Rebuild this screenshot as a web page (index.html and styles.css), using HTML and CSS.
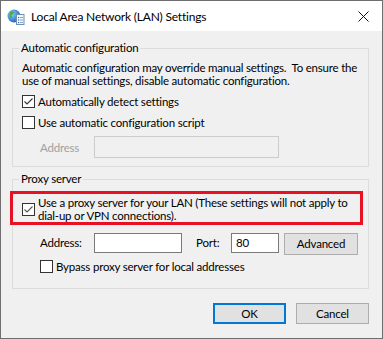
FILE: index.html
```html
<!DOCTYPE html>
<html lang="en">
<head>
  <meta charset="UTF-8">
  <title>Local Area Network (LAN) Settings</title>
  <link rel="stylesheet" href="styles.css">
</head>
<body>
  <div class="window">
    <div class="titlebar">
      <svg class="app-icon" width="18" height="18" viewBox="0 0 18 18">
        <defs>
          <radialGradient id="globe" cx="0.35" cy="0.35" r="0.7">
            <stop offset="0" stop-color="#8fd0ff"/>
            <stop offset="1" stop-color="#1a62b8"/>
          </radialGradient>
        </defs>
        <circle cx="7" cy="8" r="6.5" fill="url(#globe)"/>
        <path d="M3 4 Q5 3 7 4 L6.5 6 L4.5 7 L5 9.5 L3 10 Q1.5 7 3 4 Z" fill="#4caf3a"/>
        <path d="M8.5 9 L11 8.5 L12 11 L9.5 13.5 L8.5 12 Z" fill="#4caf3a"/>
        <rect x="9.5" y="6.5" width="7.5" height="10" fill="#f4f8fc" stroke="#6f8fb5"/>
        <rect x="11" y="9" width="1.2" height="1.2" fill="#3a6fb0"/>
        <rect x="13" y="9" width="3" height="1" fill="#8aa3c2"/>
        <rect x="11" y="11.5" width="1.2" height="1.2" fill="#3a6fb0"/>
        <rect x="13" y="11.5" width="3" height="1" fill="#8aa3c2"/>
        <rect x="11" y="14" width="1.2" height="1.2" fill="#3a6fb0"/>
        <rect x="13" y="14" width="3" height="1" fill="#8aa3c2"/>
      </svg>
      <span class="title">Local Area Network (LAN) Settings</span>
      <svg class="close" width="11" height="11" viewBox="0 0 11 11">
        <path d="M0.5 0.5 L10.5 10.5 M10.5 0.5 L0.5 10.5" stroke="#111" stroke-width="1"/>
      </svg>
    </div>

    <div class="content">
      <fieldset class="group group-auto">
        <legend>Automatic configuration</legend>
        <p class="desc">Automatic configuration may override manual settings.&nbsp; To ensure the<br>use of manual settings, disable automatic configuration.</p>
        <div class="check">
          <span class="box">
            <svg width="11" height="11" viewBox="0 0 11 11"><polyline points="1.5,5.5 4,8 9.5,2.5" fill="none" stroke="#333" stroke-width="1.1"/></svg>
          </span>
          <span>Automatically detect settings</span>
        </div>
        <div class="check">
          <span class="box"></span>
          <span>Use automatic configuration script</span>
        </div>
        <div class="field-row script-row">
          <span class="field-label disabled">Address</span>
          <span class="input input-disabled input-script"></span>
        </div>
      </fieldset>

      <fieldset class="group group-proxy">
        <legend>Proxy server</legend>
        <div class="check proxy-use">
          <span class="box">
            <svg width="11" height="11" viewBox="0 0 11 11"><polyline points="1.5,5.5 4,8 9.5,2.5" fill="none" stroke="#555" stroke-width="1.1"/></svg>
          </span>
          <span>Use a proxy server for your LAN (These settings will not apply to<br>dial-up or VPN connections).</span>
        </div>
        <div class="field-row proxy-row">
          <span class="field-label">Address:</span>
          <span class="input input-address"></span>
          <span class="field-label label-port">Port:</span>
          <span class="input input-port">80</span>
          <button class="btn btn-advanced">Advanced</button>
        </div>
        <div class="check bypass">
          <span class="box"></span>
          <span>Bypass proxy server for local addresses</span>
        </div>
      </fieldset>

      <div class="buttons">
        <button class="btn btn-default">OK</button>
        <button class="btn">Cancel</button>
      </div>
    </div>
  </div>
</body>
</html>
```

FILE: styles.css
```css
body {
  margin: 0;
  background-color: #f0f0f0;
  font-family: Lato, "Noto Sans", sans-serif;
  font-size: 11.5px;
  letter-spacing: -0.2px;
  color: #000;
}

.window {
  width: 383px;
  height: 339px;
  box-sizing: border-box;
  border: 1px solid #6e6e6e;
  background-color: #f0f0f0;
}

.titlebar {
  height: 30px;
  background-color: #fff;
  display: flex;
  align-items: center;
  padding-left: 6px;
}

.app-icon {
  margin-right: 6px;
  margin-top: 1px;
}

.title {
  flex: 1;
  font-size: 12px;
}

.close {
  margin-right: 13px;
}

.content {
  padding: 9px 0 0 11px;
}

.group {
  width: 357px;
  box-sizing: border-box;
  margin: 0;
  padding: 0 8px 0 9px;
  border: 1px solid #dcdcdc;
}

.group legend {
  margin-left: -3px;
  padding: 0 2px;
  line-height: 16px;
}

.group-auto {
  padding-bottom: 8px;
}

.group-proxy {
  margin-top: 4px;
  padding-bottom: 11px;
}

.desc {
  margin: 5px 0 4px 0;
  line-height: 13px;
  white-space: nowrap;
}

.check {
  display: flex;
  align-items: center;
  height: 21px;
  white-space: nowrap;
}

.box {
  width: 13px;
  height: 13px;
  box-sizing: border-box;
  border: 1px solid #333;
  background-color: #fff;
  margin-right: 3px;
  display: flex;
  align-items: center;
  justify-content: center;
  flex-shrink: 0;
}

.field-row {
  display: flex;
  align-items: center;
  padding-left: 18px;
}

.field-label {
  width: 54px;
}

.field-label.disabled {
  color: #a0a0a0;
}

.script-row {
  margin-top: 3px;
  height: 22px;
}

.input {
  box-sizing: border-box;
  border: 1px solid #7a7a7a;
  background-color: #fff;
  height: 20px;
  line-height: 18px;
  padding-left: 4px;
}

.input-disabled {
  border-color: #cccccc;
  background-color: #f0f0f0;
}

.input-script {
  width: 185px;
  height: 22px;
}

.proxy-use {
  position: relative;
  height: 26px;
  margin-top: 9px;
  line-height: 13px;
}

.proxy-use::after {
  content: "";
  position: absolute;
  left: -12px;
  top: -5px;
  width: 347px;
  height: 28px;
  border: 3px solid #e81123;
}

.proxy-row {
  margin-top: 9px;
  height: 23px;
}

.input-address {
  width: 88px;
}

.label-port {
  width: 35px;
  margin-left: 14px;
}

.input-port {
  width: 48px;
}

.btn {
  font-family: inherit;
  font-size: 11.5px;
  letter-spacing: -0.2px;
  color: #000;
  background-color: #e1e1e1;
  border: 1px solid #adadad;
  height: 21px;
  padding: 0;
  width: 73px;
}

.btn-advanced {
  width: 74px;
  height: 22px;
  margin-left: 5px;
  margin-top: 2px;
}

.bypass {
  margin-top: 2px;
  padding-left: 18px;
}

.buttons {
  width: 357px;
  display: flex;
  justify-content: flex-end;
  gap: 10px;
  margin-top: 14px;
}

.btn-default {
  border: 2px solid #0078d7;
}
```
